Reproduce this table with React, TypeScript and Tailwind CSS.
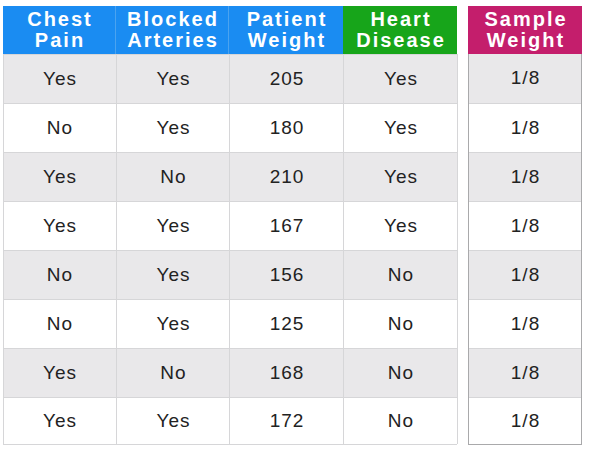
import React from "react";

const rows = [
  ["Yes", "Yes", "205", "Yes"],
  ["No", "Yes", "180", "Yes"],
  ["Yes", "No", "210", "Yes"],
  ["Yes", "Yes", "167", "Yes"],
  ["No", "Yes", "156", "No"],
  ["No", "Yes", "125", "No"],
  ["Yes", "No", "168", "No"],
  ["Yes", "Yes", "172", "No"],
];

const font = { fontFamily: '"Liberation Sans", Arial, Helvetica, sans-serif' };

const head = "flex items-center justify-center text-center pl-[2px]";

export default function App() {
  return (
    <div className="w-[593px] h-[451px] bg-white flex pt-[6px] pl-[3px]" style={font}>
      <div className="flex flex-col w-[454px]">
        <div className="grid grid-cols-[113px_113px_114px_114px] h-[48px] text-white font-bold text-[20px] leading-[21px] tracking-[2px]">
          <div className={`bg-[#1a8cf2] border-r border-[#4aa3f0] ${head}`}>Chest<br />Pain</div>
          <div className={`bg-[#1a8cf2] border-r border-[#4aa3f0] ${head}`}>Blocked<br />Arteries</div>
          <div className={`bg-[#1a8cf2] ${head}`}>Patient<br />Weight</div>
          <div className={`bg-[#17a51a] ${head}`}>Heart<br />Disease</div>
        </div>
        {rows.map((r, i) => (
          <div
            key={i}
            className={`grid grid-cols-[113px_113px_114px_114px] ${i === 7 ? "h-[48px] border-b" : "h-[49px]"} border-l border-[#d6d6d8] ${i % 2 === 0 ? "bg-[#e9e8ea]" : "bg-white"} text-[19px] tracking-[1px] text-[#222]`}
          >
            {r.map((c, j) => (
              <div
                key={j}
                className={`flex items-center justify-center pl-[1px] border-r border-t border-[#d6d6d8] ${j === 0 ? "-ml-px" : ""}`}
              >
                {c}
              </div>
            ))}
          </div>
        ))}
      </div>
      <div className="ml-[11px] flex flex-col w-[114px]">
        <div className="h-[48px] bg-[#c41e6c] text-white font-bold text-[20px] leading-[21px] tracking-[2px] flex items-center justify-center text-center pl-[2px]">
          Sample<br />Weight
        </div>
        <div className="flex flex-col border-l border-r border-b border-[#a9a9ab]">
          {rows.map((_, i) => (
            <div
              key={i}
              className={`${i === 7 ? "h-[47px]" : "h-[49px]"} flex items-center justify-center pl-[1px] text-[19px] tracking-[1px] text-[#222] ${i % 2 === 0 ? "bg-[#e9e8ea]" : "bg-white"} ${i > 0 ? "border-t border-[#d6d6d8]" : ""}`}
            >
              1/8
            </div>
          ))}
        </div>
      </div>
    </div>
  );
}
